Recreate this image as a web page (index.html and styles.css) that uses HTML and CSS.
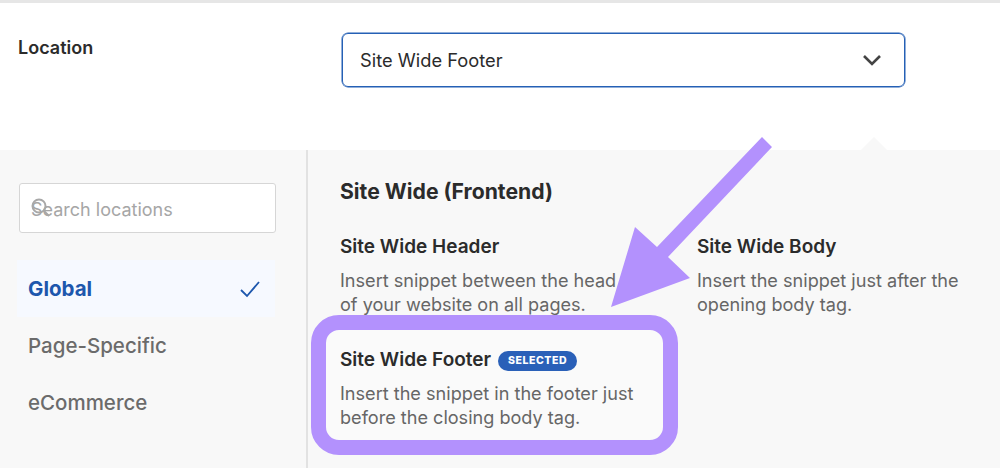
FILE: index.html
```html
<!DOCTYPE html>
<html lang="en">
<head>
    <meta charset="UTF-8">
    <meta name="viewport" content="width=device-width, initial-scale=1.0">
    <title>Location</title>
    <link rel="stylesheet" href="styles.css">
</head>
<body>
    <!-- Location row -->
    <div class="location-row">
        <div class="location-label">Location</div>
        <div class="select-box">
            <span>Site Wide Footer</span>
            <svg class="chevron" width="20" height="12" viewBox="0 0 20 12"><path d="M2 2l8 8 8-8" fill="none" stroke="#444" stroke-width="2.6"/></svg>
        </div>
    </div>

    <!-- Location picker -->
    <div class="picker">
        <div class="picker-notch"></div>
        <div class="sidebar">
            <div class="search-box">
                <svg class="search-icon" width="22" height="22" viewBox="0 0 22 22"><circle cx="9" cy="9" r="6.5" fill="none" stroke="#a8a8a8" stroke-width="2"/><path d="M14 14l5 5" stroke="#a8a8a8" stroke-width="2"/></svg>
                <span>Search locations</span>
            </div>
            <div class="menu-item active">
                <span>Global</span>
                <svg width="22" height="18" viewBox="0 0 22 18"><path d="M2 10l6 6L20 2" fill="none" stroke="#1d57ad" stroke-width="1.8"/></svg>
            </div>
            <div class="menu-item">Page-Specific</div>
            <div class="menu-item">eCommerce</div>
        </div>
        <div class="content">
            <h3>Site Wide (Frontend)</h3>
            <div class="snippets">
                <div class="snippet">
                    <h4>Site Wide Header</h4>
                    <p>Insert snippet between the head<br>of your website on all pages.</p>
                </div>
                <div class="snippet">
                    <h4>Site Wide Body</h4>
                    <p>Insert the snippet just after the<br>opening body tag.</p>
                </div>
                <div class="snippet selected">
                    <h4>Site Wide Footer <span class="badge">SELECTED</span></h4>
                    <p>Insert the snippet in the footer just<br>before the closing body tag.</p>
                </div>
            </div>
        </div>
    </div>

    <!-- Arrow drawn over the page -->
    <svg class="arrow" width="1000" height="468" viewBox="0 0 1000 468"><polygon points="762,137 772,147 668,257 690,278 611,307 635,227 657,247" fill="#b391fd"/></svg>
</body>
</html>
```
FILE: styles.css
```css
* { margin: 0; padding: 0; box-sizing: border-box; }
body { font-family: Inter, 'Liberation Sans', sans-serif; background-color: #fff; border-top: 3px solid #e6e6e6; width: 1000px; height: 468px; overflow: hidden; position: relative; color: #2b2b2b; }

/* Location row */
.location-row { display: flex; height: 147px; padding: 30px 94px 0 18px; }
.location-label { width: 324px; font-size: 18px; font-weight: 600; line-height: 30px; }
.select-box { width: 563px; height: 54px; border: 1px solid #2560b5; box-shadow: 0 0 0 0.5px #2560b5; border-radius: 6px; padding: 0 22px 0 17px; display: flex; justify-content: space-between; align-items: center; font-size: 18.3px; }

/* Picker */
.picker { display: flex; height: 318px; background-color: #f8f8f8; position: relative; }
.picker-notch { position: absolute; top: -13px; left: 861px; width: 26px; height: 13px; background-color: #f8f8f8; clip-path: polygon(50% 0, 100% 100%, 0 100%); }
.sidebar { width: 308px; border-right: 2px solid #e2e2e2; padding: 33px 30px 0 17px; }
.search-box { position: relative; width: 257px; height: 50px; margin-left: 2px; padding: 2px 0 0 11px; background-color: #fff; border: 1.5px solid #d6d6d6; border-radius: 3px; display: flex; align-items: center; font-size: 18px; color: #a6a6a6; }
.search-icon { position: absolute; left: 10px; top: 13px; }
.menu-item { width: 258px; height: 57px; padding: 0 14px 0 11px; display: flex; justify-content: space-between; align-items: center; font-size: 20.5px; font-weight: 500; color: #6b6b6b; }
.menu-item.active { margin-top: 27px; background-color: #f6f9ff; color: #1d57ad; font-weight: 700; }

/* Snippets */
.content { flex: 1; padding: 26px 0 0 32px; }
.content h3 { font-size: 21.2px; font-weight: 700; line-height: 30px; margin-bottom: 29px; }
.snippets { display: grid; grid-template-columns: 357px 1fr; }
.snippet { height: 80px; }
.snippet h4 { font-size: 19px; font-weight: 600; line-height: 24px; margin-bottom: 9px; }
.snippet p { font-size: 18.1px; line-height: 24px; color: #666; }
.snippet.selected { width: 367px; height: 140px; margin-left: -29px; padding: 18px 14px; background-color: #fafafa; border: 15px solid #b391fd; border-radius: 28px; }
.badge { display: inline-block; vertical-align: 2px; margin-left: 2px; padding: 0 10px; height: 20px; line-height: 20px; border-radius: 10px; background-color: #2a60b8; color: #fff; font-size: 10.5px; font-weight: 800; letter-spacing: 0.6px; }

/* Arrow */
.arrow { position: absolute; top: -3px; left: 0; }
```
